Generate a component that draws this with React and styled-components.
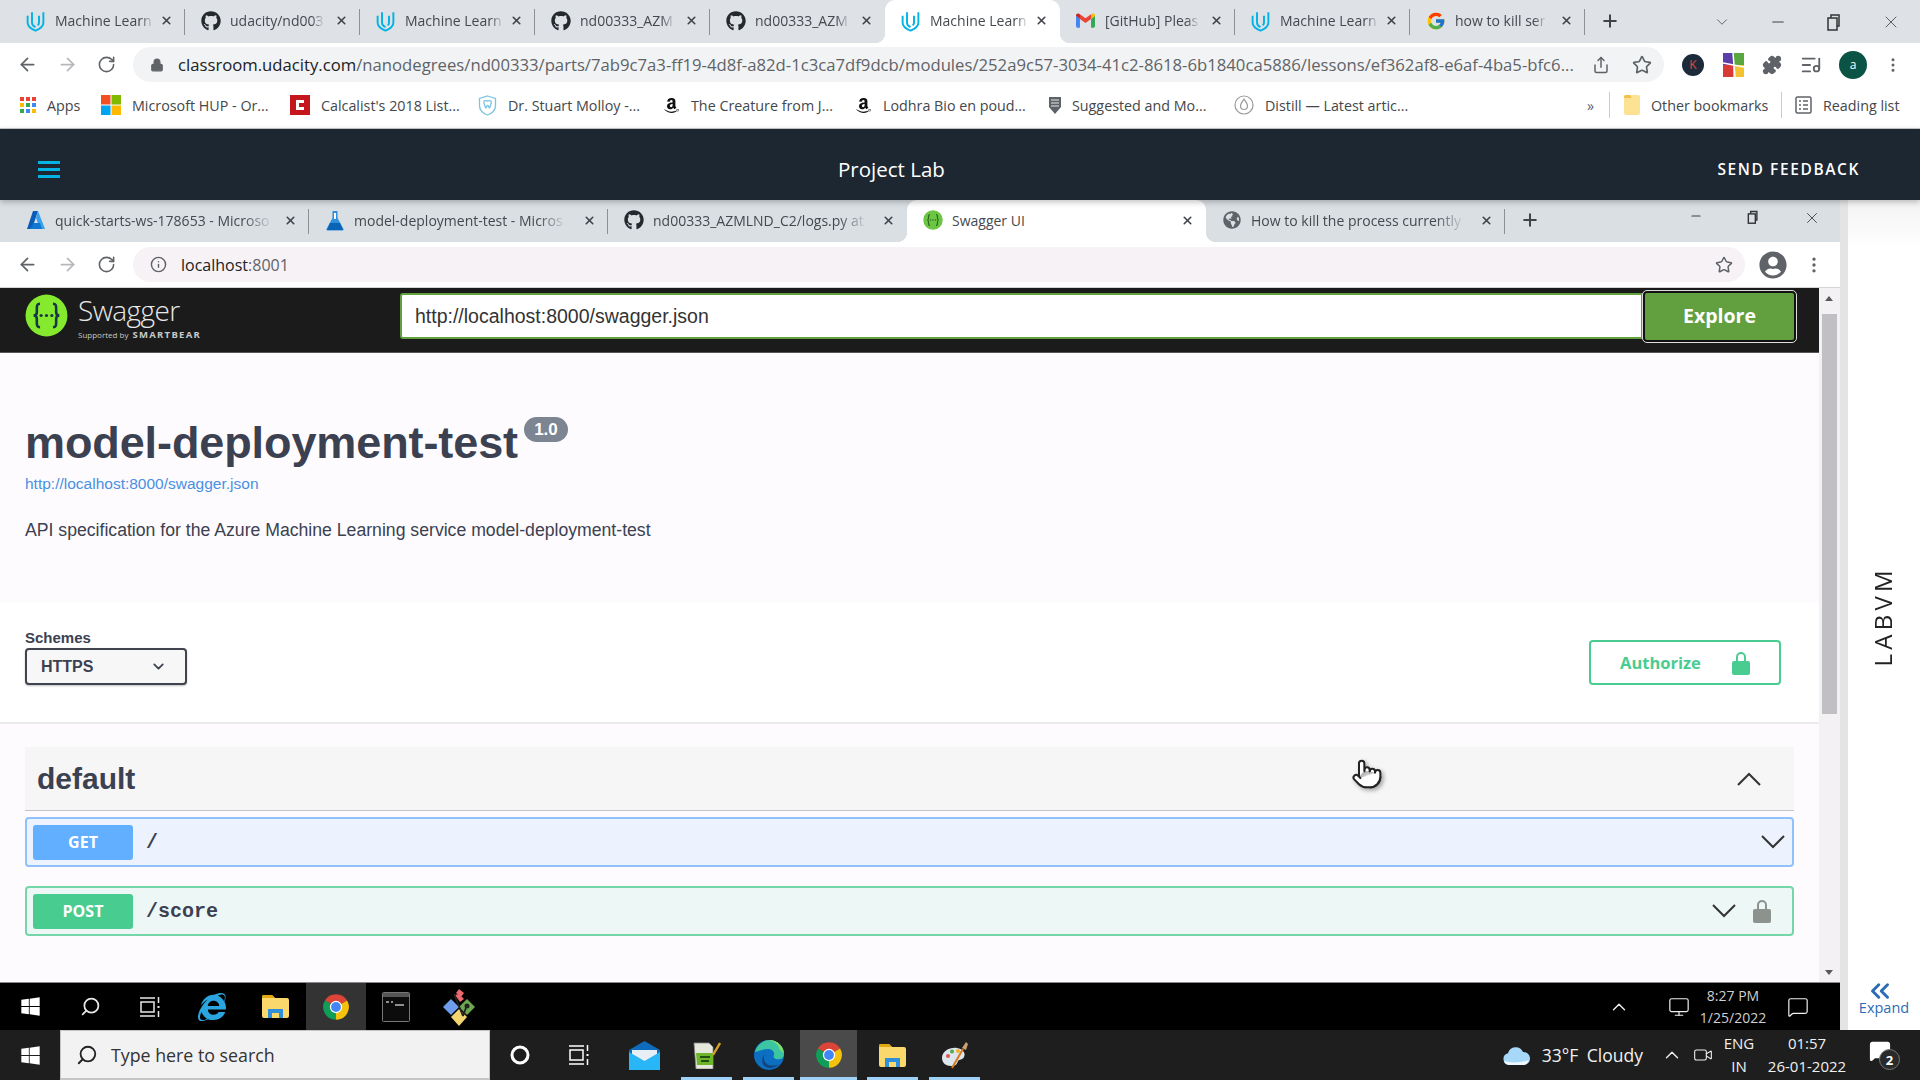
import React from 'react';
import styled, { createGlobalStyle, css } from 'styled-components';
import {
  ArrowLeft, ArrowRight, RotateCw, Lock, Star, X, Plus, Minus, ChevronDown, ChevronUp,
  Puzzle, EllipsisVertical, Info, Search, Pointer, ListMusic, MessageSquare, Monitor, Share, ChevronsLeft, Video,
} from 'lucide-react';
import { FaGithub, FaAmazon, FaWindows, FaInternetExplorer, FaGlobeAmericas, FaUserCircle } from 'react-icons/fa';
import { FcGoogle } from 'react-icons/fc';

const UI = '"Open Sans", "Noto Sans", sans-serif';
const SWAGGER = '"Liberation Sans", Arial, sans-serif';

const Global = createGlobalStyle`
  html, body { margin: 0; padding: 0; width: 1920px; height: 1080px; overflow: hidden; background: #fff; }
  * { box-sizing: border-box; }
  body { font-family: ${UI}; color: #3c4043; }
`;

const Screen = styled.div`
  width: 1920px;
  height: 1080px;
  display: flex;
  flex-direction: column;
  overflow: hidden;
`;

/* chrome */
const TabStrip = styled.div`
  height: ${p => p.$h}px;
  flex: none;
  display: flex;
  align-items: flex-end;
  padding-left: 10px;
  background: ${p => p.$bg};
`;

const activeCorners = css`
  &::before, &::after {
    content: '';
    position: absolute;
    bottom: 0;
    width: 10px;
    height: 10px;
  }
  &::before {
    left: -10px;
    background: radial-gradient(circle at 0 0, transparent 10px, #fff 10.5px);
  }
  &::after {
    right: -10px;
    background: radial-gradient(circle at 100% 0, transparent 10px, #fff 10.5px);
  }
`;

const tabSeparator = css`
  &::after {
    content: '';
    position: absolute;
    right: 0;
    top: 9px;
    bottom: 8px;
    width: 1px;
    background: #8d9095;
  }
`;

const Tab = styled.div`
  position: relative;
  width: ${p => p.$w}px;
  height: ${p => p.$h}px;
  flex: none;
  display: flex;
  align-items: center;
  padding: 0 0 2px 15px;
  font-size: 14px;
  color: #45494e;
  background: ${p => (p.$active ? '#fff' : 'transparent')};
  border-radius: ${p => (p.$active ? '10px 10px 0 0' : '0')};
  ${p => p.$sep && tabSeparator}
  ${p => p.$active && activeCorners}
`;

const TabIcon = styled.span`
  width: 21px;
  height: 21px;
  flex: none;
  display: flex;
  align-items: center;
  justify-content: center;
`;

const TabTitle = styled.span`
  margin-left: 9px;
  white-space: nowrap;
  -webkit-mask-image: ${p => (p.$fade ? 'linear-gradient(90deg, #000 88%, rgba(0, 0, 0, 0.15) 100%)' : 'none')};
  mask-image: ${p => (p.$fade ? 'linear-gradient(90deg, #000 88%, rgba(0, 0, 0, 0.15) 100%)' : 'none')};
`;

const TabClose = styled.span`
  width: 34px;
  margin-left: auto;
  flex: none;
  display: flex;
  justify-content: center;
  padding-right: 4px;
  color: #3f4347;
`;

const NewTab = styled.span`
  margin-left: 15px;
  height: 100%;
  padding-bottom: 2px;
  display: flex;
  align-items: center;
  color: #3f4347;
`;

const WindowControls = styled.div`
  margin-left: auto;
  height: 100%;
  display: flex;
  align-items: ${p => (p.$top ? 'flex-start' : 'center')};
  padding-top: ${p => (p.$top ? 9 : 0)}px;
  padding-right: ${p => p.$pr}px;
  gap: ${p => p.$gap}px;
  color: #3f4347;
`;

const Toolbar = styled.div`
  height: ${p => p.$h}px;
  flex: none;
  display: flex;
  align-items: center;
  background: #fff;
  padding-left: 17px;
`;

const NavButton = styled.span`
  width: 40px;
  flex: none;
  display: flex;
  color: ${p => (p.$off ? '#b5b7bb' : '#5f6368')};
`;

const Omnibox = styled.div`
  width: ${p => p.$w}px;
  height: 35px;
  margin-left: -4px;
  flex: none;
  display: flex;
  align-items: center;
  padding: 0 12px 0 17px;
  border-radius: 18px;
  background: ${p => p.$bg};
  color: #5f6368;
`;

const Url = styled.span`
  margin-left: 14px;
  font-size: ${p => p.$size}px;
  white-space: nowrap;
  color: #5f6368;
  b { font-weight: 400; color: #202124; }
`;

const OmniEnd = styled.span`
  margin-left: auto;
  flex: none;
  display: flex;
  align-items: center;
  gap: ${p => p.$gap}px;
  color: #5f6368;
`;

const ToolSlot = styled.span`
  width: ${p => p.$w}px;
  flex: none;
  display: flex;
  justify-content: center;
  color: #5f6368;
`;

const Avatar = styled.span`
  width: ${p => p.$size}px;
  height: ${p => p.$size}px;
  border-radius: 50%;
  background: ${p => p.$bg};
  color: ${p => p.$fg};
  display: flex;
  align-items: center;
  justify-content: center;
  font-size: 12px;
`;

const BookmarkBar = styled.div`
  height: 43px;
  flex: none;
  display: flex;
  align-items: center;
  padding: 0 0 4px 20px;
  background: #fff;
  border-bottom: 1px solid #c9cbce;
  font-size: 14.3px;
  color: #44474b;
`;

const Bookmark = styled.div`
  width: ${p => p.$w}px;
  margin-left: ${p => p.$ml || 0}px;
  flex: none;
  display: flex;
  align-items: center;
  gap: 11px;
  white-space: nowrap;
`;

const BarDivider = styled.span`
  width: 1px;
  height: 26px;
  background: #c9cbce;
  flex: none;
`;

const Chevrons = styled.span`
  margin-left: auto;
  width: 12px;
  margin-right: 10px;
  color: #5f6368;
`;

/* project lab header */
const ProjectHeader = styled.header`
  height: 71px;
  flex: none;
  position: relative;
  z-index: 2;
  display: grid;
  grid-template-columns: 800px auto 1fr;
  align-items: center;
  padding: 9px 60px 0 38px;
  background: #1d2731;
  box-shadow: 0 2px 6px rgba(0, 0, 0, 0.25);
  color: #fff;
`;

const Burger = styled.span`
  width: 22px;
  height: 17px;
  border-top: 3px solid #02b3e4;
  border-bottom: 3px solid #02b3e4;
  position: relative;
  &::after {
    content: '';
    position: absolute;
    left: 0;
    right: 0;
    top: 4px;
    height: 3px;
    background: #02b3e4;
  }
`;

const HeaderTitle = styled.span`
  font-size: 20.5px;
`;

const Feedback = styled.span`
  justify-self: end;
  font-size: 15.5px;
  font-weight: 600;
  letter-spacing: 1.6px;
`;

/* inner window */
const Workspace = styled.div`
  flex: 1;
  display: flex;
  min-height: 0;
`;

const InnerWindow = styled.div`
  width: 1840px;
  flex: none;
  display: flex;
  flex-direction: column;
`;

const Gutter = styled.div`
  width: 8px;
  flex: none;
  background: #e4e4e4;
`;

const SidePanel = styled.aside`
  flex: 1;
  display: flex;
  flex-direction: column;
  align-items: center;
  background: linear-gradient(180deg, #f3f3f3 0, #fff 50px);
`;

const LabLabel = styled.span`
  margin: 366px 4px 0 0;
  writing-mode: vertical-rl;
  transform: rotate(180deg);
  font-size: 24px;
  letter-spacing: 4.3px;
  color: #222;
`;

const Expand = styled.span`
  margin-top: auto;
  margin-bottom: 14px;
  display: flex;
  flex-direction: column;
  align-items: center;
  font-size: 14.5px;
  line-height: 16px;
  color: #2c6cb6;
  svg { margin: 0 8px -6px 0; }
`;

const PageRow = styled.div`
  flex: 1;
  min-height: 0;
  display: flex;
  border-top: 1px solid #d5d5d5;
`;

const Page = styled.main`
  width: 1819px;
  flex: none;
  position: relative;
  background: #fefbfe;
  font-family: ${SWAGGER};
  color: #3b4151;
`;

const ScrollTrack = styled.div`
  flex: 1;
  position: relative;
  background: #f3f1f3;
  padding: 26px 3px 0;
  &::before, &::after {
    content: '';
    position: absolute;
    left: 6px;
    border-left: 4px solid transparent;
    border-right: 4px solid transparent;
  }
  &::before { top: 8px; border-bottom: 5px solid #55595c; }
  &::after { bottom: 7px; border-top: 5px solid #55595c; }
`;

const ScrollThumb = styled.div`
  height: 400px;
  background: #c1bfc3;
`;

const TopBar = styled.div`
  height: 65px;
  display: flex;
  align-items: center;
  background: #1b1b1b;
  border-bottom: 1px solid #555;
`;

const Logo = styled.div`
  width: 400px;
  flex: none;
  display: flex;
  padding-left: 25px;
  margin-top: -6px;
`;

const LogoText = styled.div`
  margin-left: 10px;
  color: #e8e8e8;
  font-family: ${UI};
  display: flex;
  flex-direction: column;
`;

const LogoName = styled.span`
  font-size: 28px;
  line-height: 32px;
  font-weight: 300;
  letter-spacing: -0.6px;
`;

const LogoBy = styled.span`
  font-size: 8px;
  line-height: 12px;
  margin-top: 3px;
  color: #c8c8c8;
  white-space: nowrap;
  b { margin-left: 4px; font-size: 9.5px; font-weight: 700; letter-spacing: 1.3px; }
`;

const UrlInput = styled.div`
  width: 1243px;
  height: 46px;
  margin-top: -8px;
  flex: none;
  display: flex;
  align-items: center;
  padding-left: 13px;
  background: #fff;
  border: 2.5px solid #62a03f;
  border-radius: 3px 0 0 3px;
  font-size: 19.5px;
  color: #333;
`;

const ExploreButton = styled.div`
  width: 153px;
  height: 51px;
  margin-top: -8px;
  padding-bottom: 2px;
  flex: none;
  display: flex;
  align-items: center;
  justify-content: center;
  background: #62a03f;
  border: 2px solid #111;
  outline: 1px solid #ddd;
  border-radius: 4px;
  color: #fff;
  font-family: ${UI};
  font-weight: 700;
  font-size: 19.5px;
`;

const InfoBlock = styled.section`
  height: 249px;
  padding: 64px 0 0 25px;
`;

const TitleRow = styled.div`
  display: flex;
  align-items: flex-start;
`;

const Title = styled.h1`
  margin: 0;
  font-size: 45px;
  line-height: 52px;
  font-weight: 700;
  letter-spacing: -0.1px;
  color: #3b4151;
`;

const Version = styled.span`
  margin: 0 0 0 6px;
  width: 44px;
  height: 25px;
  display: flex;
  align-items: center;
  justify-content: center;
  border-radius: 13px;
  background: #7d8492;
  color: #fff;
  font-weight: 700;
  font-size: 17px;
`;

const SpecLink = styled.a`
  display: block;
  margin-top: 5px;
  font-size: 15.5px;
  line-height: 20px;
  color: #4990e2;
`;

const Description = styled.p`
  margin: 24px 0 0;
  font-size: 17.65px;
  line-height: 24px;
  color: #3b4151;
`;

const SchemeBar = styled.section`
  height: 122px;
  display: flex;
  justify-content: space-between;
  padding: 27px 38px 0 25px;
  background: #fff;
  border-bottom: 2px solid #ebebeb;
`;

const SchemeLabel = styled.div`
  font-size: 15px;
  line-height: 18px;
  font-weight: 700;
  margin-bottom: 1px;
`;

const SchemeSelect = styled.div`
  width: 162px;
  height: 37px;
  display: flex;
  align-items: center;
  justify-content: space-between;
  padding: 0 18px 0 14px;
  background: #f7f7f7;
  border: 2px solid #41444e;
  border-radius: 4px;
  box-shadow: 0 1px 2px rgba(0, 0, 0, 0.25);
  font-size: 16px;
  font-weight: 700;
`;

const AuthorizeButton = styled.div`
  width: 192px;
  height: 45px;
  margin-top: 11px;
  display: flex;
  align-items: center;
  padding-left: 29px;
  gap: 31px;
  border: 2.5px solid #49cc90;
  border-radius: 4px;
  font-family: ${UI};
  font-size: 16.5px;
  font-weight: 700;
  color: #49cc90;
`;

const Operations = styled.section`
  padding: 23px 25px 0;
`;

const TagHeader = styled.div`
  height: 64px;
  display: flex;
  align-items: center;
  justify-content: space-between;
  padding: 0 33px 0 12px;
  background: #f6f6f6;
  border-bottom: 1px solid #c3c4c9;
`;

const TagName = styled.h2`
  margin: 0;
  font-size: 30px;
  font-weight: 700;
  font-family: ${SWAGGER};
  color: #3b4151;
`;

const Operation = styled.div`
  height: 50px;
  margin-top: ${p => p.$mt}px;
  display: flex;
  align-items: center;
  padding: 0 7px 0 6px;
  background: ${p => p.$bg};
  border: 2px solid ${p => p.$border};
  border-radius: 4px;
`;

const MethodBadge = styled.span`
  width: 100px;
  height: 35px;
  flex: none;
  display: flex;
  align-items: center;
  justify-content: center;
  background: ${p => p.$bg};
  border-radius: 3px;
  color: #fff;
  font-family: ${UI};
  font-size: 16px;
  font-weight: 700;
`;

const OpPath = styled.span`
  margin-left: 13px;
  flex: 1;
  font-family: "Liberation Mono", monospace;
  font-size: 20px;
  font-weight: 700;
  color: #3b4151;
`;

const OpLock = styled.span`
  display: flex;
  margin: 0 14px 0 17px;
`;

const Cursor = styled.span`
  position: absolute;
  left: 1351px;
  top: 470px;
  filter: drop-shadow(2px 2px 2px rgba(0, 0, 0, 0.35));
`;

/* taskbars */
const Taskbar = styled.div`
  height: ${p => p.$h}px;
  flex: none;
  display: flex;
  align-items: stretch;
  background: ${p => p.$bg};
  border-top: ${p => (p.$line ? '1px solid #8a8a8a' : 'none')};
  color: #e8e8e8;
`;

const TaskSlot = styled.span`
  position: relative;
  width: ${p => p.$w}px;
  margin-left: ${p => p.$ml || 0}px;
  flex: none;
  display: flex;
  align-items: center;
  justify-content: center;
  background: ${p => (p.$active ? p.$active : 'transparent')};
  &::after {
    content: '';
    display: ${p => (p.$run ? 'block' : 'none')};
    position: absolute;
    left: 0;
    right: 0;
    bottom: 0;
    height: 3px;
    background: #9fd0f5;
  }
`;

const SearchBox = styled.div`
  width: 430px;
  flex: none;
  display: flex;
  align-items: center;
  gap: 13px;
  padding-left: 15px;
  background: #f2f2f2;
  border: 1px solid #c5c5c5;
  border-bottom-width: 2px;
  color: #333;
  font-size: 17.8px;
`;

const TrayGroup = styled.div`
  margin-left: auto;
  display: flex;
  align-items: center;
  color: #f0f0f0;
`;

const TrayIcon = styled.span`
  display: flex;
  margin-left: ${p => p.$ml || 0}px;
  margin-right: ${p => p.$mr || 0}px;
`;

const Clock = styled.div`
  width: ${p => p.$w}px;
  margin-left: ${p => p.$ml || 0}px;
  flex: none;
  text-align: center;
  font-size: ${p => p.$size}px;
  line-height: ${p => p.$lh}px;
  color: ${p => p.$fg};
`;

const Weather = styled.span`
  display: flex;
  align-items: center;
  gap: 12px;
  font-size: 17.5px;
  margin-right: 18px;
  word-spacing: 4px;
`;

const NotifyIcon = styled.span`
  position: relative;
  width: 40px;
  height: 30px;
  margin: 0 11px 0 17px;
`;

const NotifyCount = styled.span`
  position: absolute;
  left: 10px;
  top: 9px;
  width: 21px;
  height: 21px;
  border-radius: 50%;
  background: #2a2a2a;
  border: 1px solid #777;
  font-size: 13px;
  font-weight: 700;
  color: #fff;
  display: flex;
  align-items: center;
  justify-content: center;
`;

const SearchGlyph = styled(Search)`
  transform: scaleX(-1);
`;

/* drawn icons */
const UdacityIcon = () => (
  <svg width="21" height="22" viewBox="0 0 24 24" fill="none" stroke="#02b3e4" strokeWidth="2.2">
    <path d="M3 6v8c0 4 4 7 9 9 5-2 9-5 9-9V2" />
    <path d="M8 2v12c0 3 2 4 4 5M16 6v8c0 1-.5 2-1.5 3" />
  </svg>
);

const ChromeIcon = ({ size = 28 }) => (
  <svg width={size} height={size} viewBox="0 0 24 24">
    <path d="M2.47 6.5A11 11 0 0 1 21.53 6.5L12 12z" fill="#db4437" />
    <path d="M21.53 6.5A11 11 0 0 1 12 23L12 12z" fill="#f4c20d" />
    <path d="M12 23A11 11 0 0 1 2.47 6.5L12 12z" fill="#0f9d58" />
    <circle cx="12" cy="12" r="5.3" fill="#fff" />
    <circle cx="12" cy="12" r="4.2" fill="#4285f4" />
  </svg>
);

const SwaggerIcon = ({ size = 43, fg = '#173647', bg = '#85ea2d' }) => (
  <svg width={size} height={size} viewBox="0 0 40 40">
    <circle cx="20" cy="20" r="19.5" fill={bg} />
    <path d="M14 9c-3 0-3 2-3 5v3c0 2-1 3-3 3 2 0 3 1 3 3v3c0 3 0 5 3 5M26 9c3 0 3 2 3 5v3c0 2 1 3 3 3-2 0-3 1-3 3v3c0 3 0 5-3 5" fill="none" stroke={fg} strokeWidth="2.4" />
    <circle cx="15" cy="20" r="1.5" fill={fg} />
    <circle cx="20" cy="20" r="1.5" fill={fg} />
    <circle cx="25" cy="20" r="1.5" fill={fg} />
  </svg>
);

const GmailIcon = () => (
  <svg width="19" height="15" viewBox="0 0 24 18">
    <path d="M0 3v13a2 2 0 0 0 2 2h3V7z" fill="#4285f4" />
    <path d="M24 3v13a2 2 0 0 1-2 2h-3V7z" fill="#34a853" />
    <path d="M5 7l7 5 7-5V1l-7 5-7-5z" fill="#ea4335" />
    <path d="M0 3c0-3 3-3.5 5-2v6L0 3z" fill="#c5221f" />
    <path d="M24 3c0-3-3-3.5-5-2v6l5-4z" fill="#fbbc04" />
  </svg>
);

const AzureIcon = () => (
  <svg width="20" height="20" viewBox="0 0 20 20">
    <path d="M7 1h5L6 19H1z" fill="#0a5cb8" />
    <path d="M12 1l7 18h-5L10 8z" fill="#3aa0ec" />
    <path d="M8 13h6l2 6H4z" fill="#0f78d4" />
  </svg>
);

const FlaskIcon = () => (
  <svg width="20" height="21" viewBox="0 0 20 21">
    <path d="M7.5 1h5v7l6 11a1 1 0 0 1-1 1.500H2.500a1 1 0 0 1-1-1.500l6-11z" fill="#2f8fdc" />
    <path d="M5 13h10l3 7H2z" fill="#0b63b5" />
    <path d="M9 3h2v6H9z" fill="#fff" />
  </svg>
);

const AppsIcon = () => (
  <svg width="16" height="16" viewBox="0 0 16 16">
    {[['#ea4335', '#ea4335', '#ea4335'], ['#fbbc04', '#34a853', '#4285f4'], ['#34a853', '#4285f4', '#fbbc04']].map((row, r) =>
      row.map((c, i) => <rect key={`${r}${i}`} x={i * 6} y={r * 6} width="4" height="4" fill={c} />))}
  </svg>
);

const MicrosoftIcon = () => (
  <svg width="20" height="20" viewBox="0 0 20 20">
    <rect width="9.500" height="9.500" fill="#f25022" />
    <rect x="10.500" width="9.500" height="9.500" fill="#7fba00" />
    <rect y="10.500" width="9.500" height="9.500" fill="#00a4ef" />
    <rect x="10.500" y="10.500" width="9.500" height="9.500" fill="#ffb900" />
  </svg>
);

const CalcalistIcon = () => (
  <svg width="20" height="20" viewBox="0 0 20 20">
    <rect width="20" height="20" fill="#c4161c" />
    <path d="M14 5H6v10h8v-3H9V8h5z" fill="#fff" />
  </svg>
);

const ToothIcon = () => (
  <svg width="19" height="21" viewBox="0 0 19 21" fill="none" stroke="#7cc3e0" strokeWidth="1.300">
    <path d="M9.500 1l8 2.500v7c0 5-4 8-8 9.500-4-1.500-8-4.500-8-9.500v-7z" />
    <path d="M6 6c1.500-.8 2.500 0 3.500 0s2-.8 3.500 0c1 2-.5 4-1 6-.3 1-1 1-1.200 0-.2-1-.5-1.500-1.300-1.500S8.700 11 8.500 12c-.2 1-.9 1-1.200 0-.5-2-2.300-4-1.300-6z" />
  </svg>
);

const CastleIcon = () => (
  <svg width="12" height="20" viewBox="0 0 12 20">
    <path d="M0 2h12v10l-6 7-6-7z" fill="#5d6168" />
    <path d="M2 5h8M2 8h8M2 11h8" stroke="#e6e6e6" strokeWidth="1.200" />
  </svg>
);

const DistillIcon = () => (
  <svg width="20" height="20" viewBox="0 0 20 20" fill="none" stroke="#9a9a9a" strokeWidth="1.200">
    <circle cx="10" cy="10" r="9" />
    <path d="M10 4c2 3 3.500 5 3.500 7a3.500 3.500 0 0 1-7 0c0-2 1.500-4 3.500-7z" />
  </svg>
);

const FolderIcon = ({ w = 27, h = 23 }) => (
  <svg width={w} height={h} viewBox="0 0 27 23">
    <path d="M0 2a2 2 0 0 1 2-2h8l3 3h12a2 2 0 0 1 2 2v16a2 2 0 0 1-2 2H2a2 2 0 0 1-2-2z" fill="#fbd86b" />
    <path d="M0 2a2 2 0 0 1 2-2h8l3 3H0z" fill="#e2a90f" />
    <path d="M6 23v-9h15v9h-4v-5h-7v5z" fill="#2f8fd8" />
    <rect x="10" y="18" width="7" height="5" fill="#fbd86b" />
  </svg>
);

const BookmarkFolderIcon = () => (
  <svg width="16" height="20" viewBox="0 0 16 20">
    <rect width="16" height="20" rx="2" fill="#fde293" />
    <path d="M0 2a2 2 0 0 1 2-2h4l2 3H0z" fill="#f3c14c" />
  </svg>
);

const ReadingIcon = () => (
  <svg width="17" height="18" viewBox="0 0 17 18" fill="none" stroke="#5f6368" strokeWidth="1.500">
    <rect x="1" y="1" width="15" height="16" rx="1.500" />
    <path d="M4 5h2M8 5h5M4 9h2M8 9h5M4 13h2M8 13h5" />
  </svg>
);

const TaskViewIcon = ({ color = '#e8e8e8' }) => (
  <svg width="20" height="24" viewBox="0 0 20 24" fill="none" stroke={color} strokeWidth="1.500">
    <path d="M0 3h15M0 21h15" />
    <rect x="1" y="7" width="13" height="10" />
    <path d="M18.500 2v6M18.500 16v6" />
    <rect x="17.500" y="11" width="2" height="2" fill={color} stroke="none" />
  </svg>
);

const TerminalIcon = () => (
  <svg width="28" height="30" viewBox="0 0 28 30">
    <rect x=".5" y=".5" width="27" height="29" rx="1" fill="#0c0c0c" stroke="#777" />
    <rect x="1" y="1" width="26" height="4" fill="#555" />
    <path d="M4 10h3M9 10h2M13 13h9" stroke="#bbb" strokeWidth="1.500" />
  </svg>
);

const GitIcon = () => (
  <svg width="32" height="38" viewBox="0 0 32 38">
    <path d="M8 11l8 8-8 8-8-8z" fill="#6f9ded" />
    <path d="M24 11l8 8-8 8-8-8z" fill="#6ba84f" />
    <path d="M16 21l8 8-8 9-8-9z" fill="#f4d670" />
    <path d="M16 1l5 4-3 4-5-4zM12 7l4-1 5 5-4 3z" fill="#e9686b" />
    <path d="M11 6l9 22M24 17l-4 11" stroke="#222" strokeWidth="1.800" />
    <circle cx="24" cy="18" r="2.500" fill="#222" />
  </svg>
);

const MailIcon = () => (
  <svg width="31" height="29" viewBox="0 0 31 29">
    <path d="M0 9l15.500-9L31 9v20H0z" fill="#0f6cbd" />
    <path d="M3 9h25v6l-12.500 7L3 15z" fill="#e8eef5" />
    <path d="M0 11l15.500 9L31 11v18H0z" fill="#29b6f6" />
  </svg>
);

const NotepadIcon = () => (
  <svg width="28" height="28" viewBox="0 0 28 28">
    <path d="M1 2h15l4 4v22H3z" fill="#e6e8dc" stroke="#888" strokeWidth=".8" />
    <path d="M3 12h17v12H4z" fill="#6fb52c" />
    <path d="M7 16h10M8 20h8" stroke="#24500f" strokeWidth="2" />
    <path d="M20 14l7-12" stroke="#d8a028" strokeWidth="2.400" />
  </svg>
);

const EdgeIcon = () => (
  <svg width="30" height="30" viewBox="0 0 30 30">
    <circle cx="15" cy="15" r="15" fill="#0c6fc1" />
    <path d="M1 12C3 4 10 0 15 0c9 0 15 7 15 14 0 5-5 6-8 5-2-.7-3-2-2-4 1-3-2-6-6-6-6 0-11 3-13 3z" fill="#3cc5a3" />
    <path d="M30 14c0-7-6-14-15-14 6 2 10 5 10 8 1 3 5 4 5 6z" fill="#7fdb6a" />
    <path d="M12 13c-3 2-3 8 1 11 3 2 8 2 12 0-4 4-9 5-13 3-5-2-5-11 0-14z" fill="#14457f" />
  </svg>
);

const PaintIcon = () => (
  <svg width="28" height="28" viewBox="0 0 28 28">
    <path d="M1 17C1 10 9 6 16 7c6 1 9 5 7 9-1 3-5 2-6 4-1 3-2 5-7 5-5 0-9-3-9-8z" fill="#dce6ee" />
    <circle cx="7" cy="15" r="2" fill="#e0584d" />
    <circle cx="11" cy="10.500" r="2" fill="#57a84a" />
    <circle cx="17" cy="10" r="2" fill="#f0b429" />
    <path d="M11 27L22 8" stroke="#d97a1e" strokeWidth="2" />
    <path d="M21 7l4-6 2 2-2 6z" fill="#caa070" />
  </svg>
);

const CloudIcon = () => (
  <svg width="27" height="19" viewBox="0 0 27 19">
    <path d="M6 19a6 6 0 0 1-1-11.800A8 8 0 0 1 20 6a6.500 6.500 0 0 1 1 13z" fill="#a8d8f8" />
    <path d="M6 19a6 6 0 0 1-5-4c5 2 18 2 25-1a6.500 6.500 0 0 1-5 5z" fill="#f0f8ff" />
  </svg>
);

const PadlockIcon = ({ color }) => (
  <svg width="18" height="24" viewBox="0 0 18 24">
    <path d="M5 11V6a4 4 0 0 1 8 0v5" fill="none" stroke={color} strokeWidth="2" />
    <rect y="10" width="18" height="14" rx="2" fill={color} />
  </svg>
);

const ThinChevron = ({ up }) => (
  <svg width="24" height="14" viewBox="0 0 24 14" fill="none" stroke="#333" strokeWidth="2">
    <path d={up ? 'M1 13L12 2l11 11' : 'M1 1l11 11L23 1'} />
  </svg>
);

const RestoreIcon = ({ w, h, sw }) => (
  <svg width={w} height={h} viewBox="0 0 18 18" fill="none" stroke="#333" strokeWidth={sw}>
    <rect x="3" y="5" width="9" height="12" />
    <path d="M6 5V2h8v11h-2" />
  </svg>
);

const ExtensionIcon = () => (
  <svg width="21" height="24" viewBox="0 0 21 24">
    <rect width="21" height="24" fill="#d93a36" />
    <rect width="10" height="12" fill="#5b3ea8" />
    <rect x="10" y="12" width="11" height="12" fill="#f2c230" />
    <rect x="10" width="11" height="12" fill="#58a83f" />
    <path d="M10 0l2 24M0 10l21 4" stroke="#fff" strokeWidth="1.500" />
  </svg>
);

const RingIcon = () => (
  <svg width="20" height="20" viewBox="0 0 20 20" fill="none" stroke="#fff" strokeWidth="3">
    <circle cx="10" cy="10" r="8" />
  </svg>
);

const outerTabs = [
  { icon: <UdacityIcon />, title: 'Machine Learn', sep: true, fade: true },
  { icon: <FaGithub size={20} color="#24292e" />, title: 'udacity/nd003', sep: true, fade: true },
  { icon: <UdacityIcon />, title: 'Machine Learn', sep: true, fade: true },
  { icon: <FaGithub size={20} color="#24292e" />, title: 'nd00333_AZM', sep: true, fade: true },
  { icon: <FaGithub size={20} color="#24292e" />, title: 'nd00333_AZM', fade: true },
  { icon: <UdacityIcon />, title: 'Machine Learn', active: true, fade: true },
  { icon: <GmailIcon />, title: '[GitHub] Pleas', sep: true, fade: true },
  { icon: <UdacityIcon />, title: 'Machine Learn', sep: true, fade: true },
  { icon: <FcGoogle size={20} />, title: 'how to kill ser', sep: true, fade: true },
];

const innerTabs = [
  { icon: <AzureIcon />, title: 'quick-starts-ws-178653 - Microso', sep: true, fade: true },
  { icon: <FlaskIcon />, title: 'model-deployment-test - Micros', sep: true, fade: true },
  { icon: <FaGithub size={20} color="#24292e" />, title: 'nd00333_AZMLND_C2/logs.py at', fade: true },
  { icon: <SwaggerIcon size={20} fg="#2a6a1a" bg="#6cc644" />, title: 'Swagger UI', active: true },
  { icon: <FaGlobeAmericas size={18} color="#5f6368" />, title: 'How to kill the process currently', sep: true, fade: true },
];

const bookmarks = [
  { w: 81, icon: <AppsIcon />, label: 'Apps' },
  { w: 189, icon: <MicrosoftIcon />, label: 'Microsoft HUP - Or...' },
  { w: 188, icon: <CalcalistIcon />, label: "Calcalist's 2018 List..." },
  { w: 185, icon: <ToothIcon />, label: 'Dr. Stuart Molloy -...' },
  { w: 192, icon: <FaAmazon size={17} color="#111" />, label: 'The Creature from J...' },
  { w: 194, icon: <FaAmazon size={17} color="#111" />, label: 'Lodhra Bio en poud...' },
  { w: 185, icon: <CastleIcon />, label: 'Suggested and Mo...' },
  { w: 250, icon: <DistillIcon />, label: 'Distill — Latest artic...' },
];

const Tabs = ({ items, width, height }) =>
  items.map((t, i) => (
    <Tab key={i} $w={width} $h={height} $active={t.active} $sep={t.sep}>
      <TabIcon>{t.icon}</TabIcon>
      <TabTitle $fade={t.fade}>{t.title}</TabTitle>
      <TabClose><X size={13} strokeWidth={3} /></TabClose>
    </Tab>
  ));

const App = () => (
  <Screen>
    <Global />
    <TabStrip $h={43} $bg="#dee1e6">
      <Tabs items={outerTabs} width={175} height={43} />
      <NewTab><Plus size={20} strokeWidth={2.4} /></NewTab>
      <WindowControls $pr={19} $gap={38}>
        <ChevronDown size={18} strokeWidth={1} />
        <Minus size={18} strokeWidth={1.5} />
        <RestoreIcon w={18} h={18} sw={1.5} />
        <X size={20} strokeWidth={1} />
      </WindowControls>
    </TabStrip>

    <Toolbar $h={43}>
      <NavButton><ArrowLeft size={21} /></NavButton>
      <NavButton $off><ArrowRight size={21} /></NavButton>
      <NavButton><RotateCw size={19} /></NavButton>
      <Omnibox $w={1531} $bg="#f1f3f4">
        <Lock size={14} fill="#5f6368" />
        <Url $size={16.7}><b>classroom.udacity.com</b>/nanodegrees/nd00333/parts/7ab9c7a3-ff19-4d8f-a82d-1c3ca7df9dcb/modules/252a9c57-3034-41c2-8618-6b1840ca5886/lessons/ef362af8-e6af-4ba5-bfc6...</Url>
        <OmniEnd $gap={22}><Share size={18} /><Star size={20} /></OmniEnd>
      </Omnibox>
      <ToolSlot $w={58}><Avatar $size={22} $bg="#1d2a3a" $fg="#e0473f">K</Avatar></ToolSlot>
      <ToolSlot $w={22}><ExtensionIcon /></ToolSlot>
      <ToolSlot $w={56}><Puzzle size={20} fill="#5f6368" /></ToolSlot>
      <ToolSlot $w={22}><ListMusic size={22} /></ToolSlot>
      <ToolSlot $w={62}><Avatar $size={28} $bg="#0b5345" $fg="#fff">a</Avatar></ToolSlot>
      <ToolSlot $w={18}><EllipsisVertical size={20} /></ToolSlot>
    </Toolbar>

    <BookmarkBar>
      {bookmarks.map(b => (
        <Bookmark key={b.label} $w={b.w}>{b.icon}{b.label}</Bookmark>
      ))}
      <Chevrons>»</Chevrons>
      <BarDivider />
      <Bookmark $w={157} $ml={14}><BookmarkFolderIcon />Other bookmarks</Bookmark>
      <BarDivider />
      <Bookmark $w={125} $ml={13}><ReadingIcon />Reading list</Bookmark>
    </BookmarkBar>

    <ProjectHeader>
      <Burger />
      <HeaderTitle>Project Lab</HeaderTitle>
      <Feedback>SEND FEEDBACK</Feedback>
    </ProjectHeader>

    <Workspace>
      <InnerWindow>
        <TabStrip $h={42} $bg="#dadfe4">
          <Tabs items={innerTabs} width={299} height={42} />
          <NewTab><Plus size={20} strokeWidth={2.4} /></NewTab>
          <WindowControls $top $pr={19} $gap={43}>
            <Minus size={14} strokeWidth={2} />
            <RestoreIcon w={14} h={16} sw={1.8} />
            <X size={18} strokeWidth={1.2} />
          </WindowControls>
        </TabStrip>
        <Toolbar $h={45}>
          <NavButton><ArrowLeft size={21} /></NavButton>
          <NavButton $off><ArrowRight size={21} /></NavButton>
          <NavButton><RotateCw size={19} /></NavButton>
          <Omnibox $w={1612} $bg="#f6f2f6">
            <Info size={17} />
            <Url $size={16}><b>localhost</b>:8001</Url>
            <OmniEnd $gap={0}><Star size={18} /></OmniEnd>
          </Omnibox>
          <ToolSlot $w={56}><FaUserCircle size={28} color="#5f6368" /></ToolSlot>
          <ToolSlot $w={26}><EllipsisVertical size={20} /></ToolSlot>
        </Toolbar>
        <PageRow>
          <Page>
            <TopBar>
              <Logo>
                <SwaggerIcon />
                <LogoText>
                  <LogoName>Swagger</LogoName>
                  <LogoBy>Supported by<b>SMARTBEAR</b></LogoBy>
                </LogoText>
              </Logo>
              <UrlInput>http://localhost:8000/swagger.json</UrlInput>
              <ExploreButton>Explore</ExploreButton>
            </TopBar>
            <InfoBlock>
              <TitleRow>
                <Title>model-deployment-test</Title>
                <Version>1.0</Version>
              </TitleRow>
              <SpecLink>http://localhost:8000/swagger.json</SpecLink>
              <Description>API specification for the Azure Machine Learning service model-deployment-test</Description>
            </InfoBlock>
            <SchemeBar>
              <div>
                <SchemeLabel>Schemes</SchemeLabel>
                <SchemeSelect>HTTPS<ChevronDown size={17} strokeWidth={2.5} /></SchemeSelect>
              </div>
              <AuthorizeButton>Authorize<PadlockIcon color="#49cc90" /></AuthorizeButton>
            </SchemeBar>
            <Operations>
              <TagHeader>
                <TagName>default</TagName>
                <ThinChevron up />
              </TagHeader>
              <Operation $mt={6} $bg="#ecf3fe" $border="#8fc1fb">
                <MethodBadge $bg="#61affe">GET</MethodBadge>
                <OpPath>/</OpPath>
                <ThinChevron />
              </Operation>
              <Operation $mt={19} $bg="#edf7f5" $border="#74d6a9">
                <MethodBadge $bg="#49cc90">POST</MethodBadge>
                <OpPath>/score</OpPath>
                <ThinChevron />
                <OpLock><PadlockIcon color="#8c938e" /></OpLock>
              </Operation>
            </Operations>
            <Cursor><Pointer size={32} fill="#fff" color="#222" strokeWidth={1.5} /></Cursor>
          </Page>
          <ScrollTrack><ScrollThumb /></ScrollTrack>
        </PageRow>
        <Taskbar $h={48} $bg="#000" $line>
          <TaskSlot $w={60}><FaWindows size={21} color="#fff" /></TaskSlot>
          <TaskSlot $w={60}><SearchGlyph size={21} color="#e8e8e8" /></TaskSlot>
          <TaskSlot $w={60}><TaskViewIcon /></TaskSlot>
          <TaskSlot $w={64}><FaInternetExplorer size={28} color="#2ba5e0" /></TaskSlot>
          <TaskSlot $w={62}><FolderIcon /></TaskSlot>
          <TaskSlot $w={60} $active="#333"><ChromeIcon /></TaskSlot>
          <TaskSlot $w={60}><TerminalIcon /></TaskSlot>
          <TaskSlot $w={66}><GitIcon /></TaskSlot>
          <TrayGroup>
            <TrayIcon><ChevronUp size={22} strokeWidth={1.5} /></TrayIcon>
            <TrayIcon $ml={38}><Monitor size={22} strokeWidth={1.3} /></TrayIcon>
            <Clock $w={80} $ml={3} $size={14} $lh={22} $fg="#cfcfcf">8:27 PM<br />1/25/2022</Clock>
            <TrayIcon $ml={14} $mr={31}><MessageSquare size={22} strokeWidth={1.3} /></TrayIcon>
          </TrayGroup>
        </Taskbar>
      </InnerWindow>
      <Gutter />
      <SidePanel>
        <LabLabel>LABVM</LabLabel>
        <Expand><ChevronsLeft size={30} strokeWidth={2.4} />Expand</Expand>
      </SidePanel>
    </Workspace>

    <Taskbar $h={50} $bg="#1e1e1e">
      <TaskSlot $w={60}><FaWindows size={21} color="#fff" /></TaskSlot>
      <SearchBox><SearchGlyph size={22} color="#222" />Type here to search</SearchBox>
      <TaskSlot $w={60}><RingIcon /></TaskSlot>
      <TaskSlot $w={58}><TaskViewIcon color="#fff" /></TaskSlot>
      <TaskSlot $w={73}><MailIcon /></TaskSlot>
      <TaskSlot $w={51} $run><NotepadIcon /></TaskSlot>
      <TaskSlot $w={51} $run $ml={11}><EdgeIcon /></TaskSlot>
      <TaskSlot $w={57} $run $active="#4a4a4a" $ml={6}><ChromeIcon /></TaskSlot>
      <TaskSlot $w={51} $run $ml={10}><FolderIcon /></TaskSlot>
      <TaskSlot $w={51} $run $ml={11}><PaintIcon /></TaskSlot>
      <TrayGroup>
        <Weather><CloudIcon />33°F Cloudy</Weather>
        <TrayIcon><ChevronUp size={22} strokeWidth={1.5} /></TrayIcon>
        <TrayIcon $ml={10}><Video size={20} strokeWidth={1.3} /></TrayIcon>
        <Clock $w={40} $ml={6} $size={15} $lh={23} $fg="#f0f0f0">ENG<br />IN</Clock>
        <Clock $w={90} $ml={3} $size={15} $lh={23} $fg="#f0f0f0">01:57<br />26-01-2022</Clock>
        <NotifyIcon>
          <MessageSquare size={22} fill="#fff" color="#fff" />
          <NotifyCount>2</NotifyCount>
        </NotifyIcon>
      </TrayGroup>
    </Taskbar>
  </Screen>
);

export default App;
